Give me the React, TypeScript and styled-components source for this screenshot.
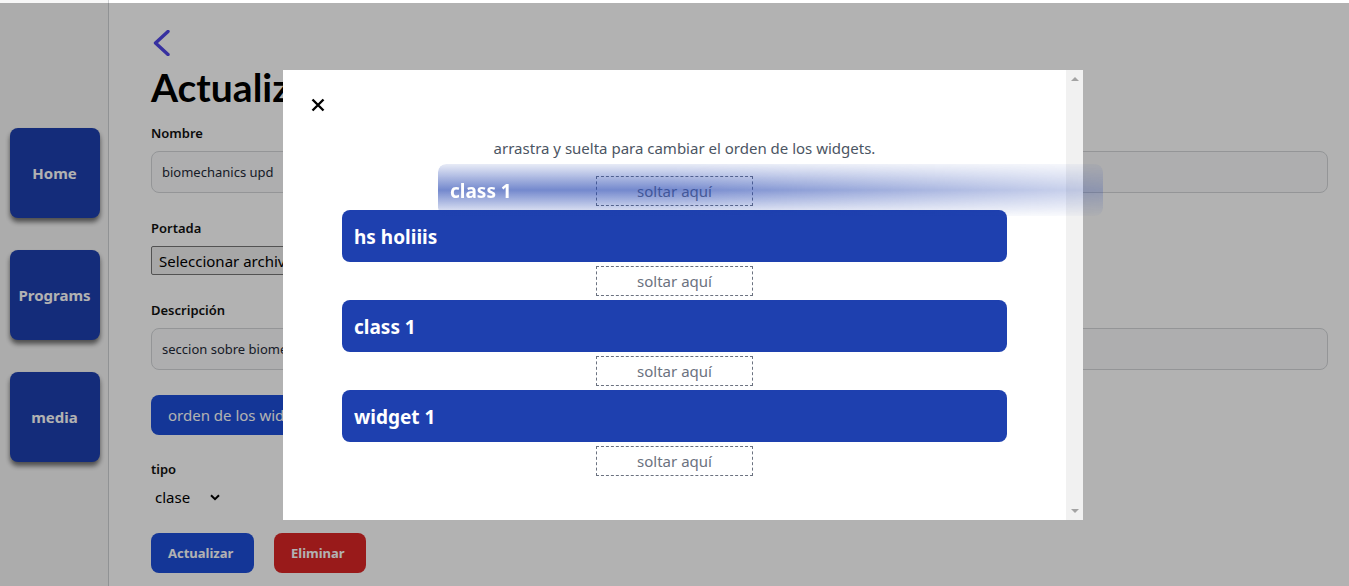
import React from "react";
import styled, { createGlobalStyle } from "styled-components";

const GlobalStyle = createGlobalStyle`
  * { box-sizing: border-box; }
  html, body { margin: 0; padding: 0; background: #ffffff; }
  body { font-family: "Noto Sans", "Open Sans", sans-serif; color: #111827; overflow: hidden; }
`;

const Page = styled.div`
  display: flex;
  min-height: 100vh;
  width: 100%;
`;

const Sidebar = styled.nav`
  width: 109px;
  flex: 0 0 109px;
  background: #f7f7f7;
  border-right: 1px solid #cfd1d4;
  display: flex;
  flex-direction: column;
  align-items: center;
  padding-top: 128px;
  gap: 32px;
`;

const NavButton = styled.button`
  width: 90px;
  height: 90px;
  margin-left: 1px;
  border: none;
  border-radius: 8px;
  background: #1e40af;
  color: #ffffff;
  font-family: "Noto Sans", sans-serif;
  font-weight: 700;
  font-size: 15px;
  box-shadow: 0 4px 5px rgba(0, 0, 0, 0.55);
  cursor: pointer;
`;

const Main = styled.main`
  flex: 1;
  padding: 30px 21px 0 42px;
  display: flex;
  flex-direction: column;
`;

const BackLink = styled.a`
  display: block;
  width: 24px;
  height: 26px;
  margin-left: 1px;
  color: #4f46e5;
`;

const Title = styled.h1`
  margin: 8px 0 0 0;
  font-family: Lato, "Noto Sans", sans-serif;
  font-size: 39px;
  line-height: 46px;
  font-weight: 700;
  color: #000;
`;

const Form = styled.form`
  display: flex;
  flex-direction: column;
  margin-top: 14px;
`;

const Field = styled.div<{ $mt?: number }>`
  display: flex;
  flex-direction: column;
  gap: 9px;
  margin-top: ${(p) => p.$mt ?? 0}px;
`;

const Label = styled.label`
  font-size: 13px;
  line-height: 18px;
  font-weight: 600;
  color: #111;
`;

const TextInput = styled.div`
  height: 42px;
  border: 1px solid #d4d6d9;
  border-radius: 8px;
  background: #f9fafb;
  display: flex;
  align-items: center;
  padding: 0 10px;
  font-size: 13px;
  color: #1f2937;
`;

const FileRow = styled.div`
  display: flex;
  align-items: center;
  gap: 8px;
  font-size: 15px;
`;

const FileButton = styled.span`
  height: 29px;
  padding: 0 7px;
  border: 1px solid #767676;
  border-radius: 2px;
  background: #efefef;
  display: flex;
  align-items: center;
  font-size: 15px;
  color: #000;
`;

const PrimaryButton = styled.button<{ $bold?: boolean; $danger?: boolean; $w?: number }>`
  height: 40px;
  width: ${(p) => (p.$w ? `${p.$w}px` : "auto")};
  border: none;
  border-radius: 8px;
  background: ${(p) => (p.$danger ? "#dc2626" : "#1d4ed8")};
  color: #ffffff;
  font-family: "Noto Sans", sans-serif;
  font-size: ${(p) => (p.$bold ? "13px" : "15px")};
  font-weight: ${(p) => (p.$bold ? 700 : 400)};
  padding: 0 17px;
  text-align: left;
`;

const OrderButton = styled(PrimaryButton)`
  align-self: flex-start;
  margin-top: 25px;
  width: 330px;
`;

const SelectBox = styled.div`
  display: flex;
  align-items: center;
  gap: 20px;
  height: 20px;
  padding-left: 4px;
  font-size: 15px;
  color: #000;
`;

const Actions = styled.div`
  display: flex;
  gap: 20px;
  margin-top: 26px;
`;

const Overlay = styled.div`
  position: fixed;
  left: 0;
  right: 0;
  top: 3px;
  bottom: 0;
  background: rgba(0, 0, 0, 0.3);
  display: flex;
  align-items: center;
  justify-content: center;
  padding-left: 17px;
`;

const Modal = styled.div`
  position: relative;
  width: 800px;
  height: 450px;
  background: #ffffff;
  display: flex;
`;

const ModalBody = styled.div`
  flex: 1;
  padding-top: 28px;
  display: flex;
  flex-direction: column;
`;

const CloseButton = styled.button`
  width: 14px;
  height: 14px;
  margin-left: 28px;
  padding: 0;
  border: none;
  background: none;
  color: #000;
  display: block;
`;

const Hint = styled.p`
  margin: 26px 0 0 0;
  text-align: center;
  font-size: 15px;
  line-height: 20px;
  color: #4b5563;
  padding-left: 20px;
`;

const List = styled.div`
  margin-top: 18px;
  display: flex;
  flex-direction: column;
  align-items: center;
  gap: 4px;
`;

const DropZone = styled.div`
  width: 157px;
  height: 30px;
  border: 1px dashed #6b7280;
  display: flex;
  align-items: center;
  justify-content: center;
  font-size: 15px;
  color: #6b7280;
`;

const WidgetItem = styled.div`
  width: 665px;
  height: 52px;
  border-radius: 8px;
  background: #1e40af;
  color: #ffffff;
  font-weight: 700;
  font-size: 19px;
  display: flex;
  align-items: center;
  padding-left: 12px;
  padding-top: 2px;
`;

const Ghost = styled.div`
  position: absolute;
  left: 155px;
  top: 94px;
  width: 665px;
  height: 52px;
  border-radius: 8px;
  padding-left: 12px;
  padding-top: 2px;
  display: flex;
  align-items: center;
  color: #ffffff;
  font-weight: 700;
  font-size: 19px;
  pointer-events: none;
  z-index: 2;
  background: linear-gradient(
    to bottom,
    rgba(30, 64, 175, 0.1) 0%,
    rgba(30, 64, 175, 0.62) 50%,
    rgba(30, 64, 175, 0.06) 100%
  );
  -webkit-mask-image: linear-gradient(to right, #000 0%, #000 35%, rgba(0, 0, 0, 0.35) 100%);
  mask-image: linear-gradient(to right, #000 0%, #000 35%, rgba(0, 0, 0, 0.35) 100%);
`;

const Scrollbar = styled.div`
  width: 17px;
  flex: 0 0 17px;
  background: #f1f1f1;
  display: flex;
  flex-direction: column;
  justify-content: space-between;
  align-items: center;
  padding: 7px 0;
`;

const Arrow = styled.span<{ $down?: boolean }>`
  width: 0;
  height: 0;
  border-left: 4px solid transparent;
  border-right: 4px solid transparent;
  ${(p) => (p.$down ? "border-top: 4px solid #a3a3a3;" : "border-bottom: 4px solid #a3a3a3;")}
`;

const widgets = ["hs holiiis", "class 1", "widget 1"];

export default function App() {
  return (
    <>
      <GlobalStyle />
      <Page>
        <Sidebar>
          <NavButton>Home</NavButton>
          <NavButton>Programs</NavButton>
          <NavButton>media</NavButton>
        </Sidebar>
        <Main>
          <BackLink>
            <svg width="20" height="26" viewBox="0 0 20 26" fill="none">
              <polyline points="16,1.5 3.5,13 16,24.5" stroke="currentColor" strokeWidth="3.4" strokeLinecap="round" strokeLinejoin="round" />
            </svg>
          </BackLink>
          <Title>Actualizar sección</Title>
          <Form>
            <Field>
              <Label>Nombre</Label>
              <TextInput>biomechanics upd</TextInput>
            </Field>
            <Field $mt={26}>
              <Label>Portada</Label>
              <FileRow>
                <FileButton>Seleccionar archivo</FileButton>
                <span>Ningún archivo seleccionado</span>
              </FileRow>
            </Field>
            <Field $mt={26}>
              <Label>Descripción</Label>
              <TextInput>seccion sobre biomechanics</TextInput>
            </Field>
            <OrderButton type="button">orden de los widgets</OrderButton>
            <Field $mt={25}>
              <Label>tipo</Label>
              <SelectBox>
                <span>clase</span>
                <svg width="10" height="7" viewBox="0 0 10 7" fill="none">
                  <polyline points="1,1.2 5,5.2 9,1.2" stroke="#000" strokeWidth="2" />
                </svg>
              </SelectBox>
            </Field>
            <Actions>
              <PrimaryButton type="button" $bold $w={103}>Actualizar</PrimaryButton>
              <PrimaryButton type="button" $bold $danger $w={92}>Eliminar</PrimaryButton>
            </Actions>
          </Form>
        </Main>
      </Page>
      <Overlay>
        <Modal>
          <ModalBody>
            <CloseButton aria-label="cerrar">
              <svg width="14" height="14" viewBox="0 0 14 14">
                <path d="M1.5 1.5 L12.5 12.5 M12.5 1.5 L1.5 12.5" stroke="#000" strokeWidth="2.4" />
              </svg>
            </CloseButton>
            <Hint>arrastra y suelta para cambiar el orden de los widgets.</Hint>
            <List>
              <DropZone>soltar aquí</DropZone>
              {widgets.map((w) => (
                <React.Fragment key={w}>
                  <WidgetItem>{w}</WidgetItem>
                  <DropZone>soltar aquí</DropZone>
                </React.Fragment>
              ))}
            </List>
          </ModalBody>
          <Scrollbar>
            <Arrow />
            <Arrow $down />
          </Scrollbar>
          <Ghost>class 1</Ghost>
        </Modal>
      </Overlay>
    </>
  );
}
